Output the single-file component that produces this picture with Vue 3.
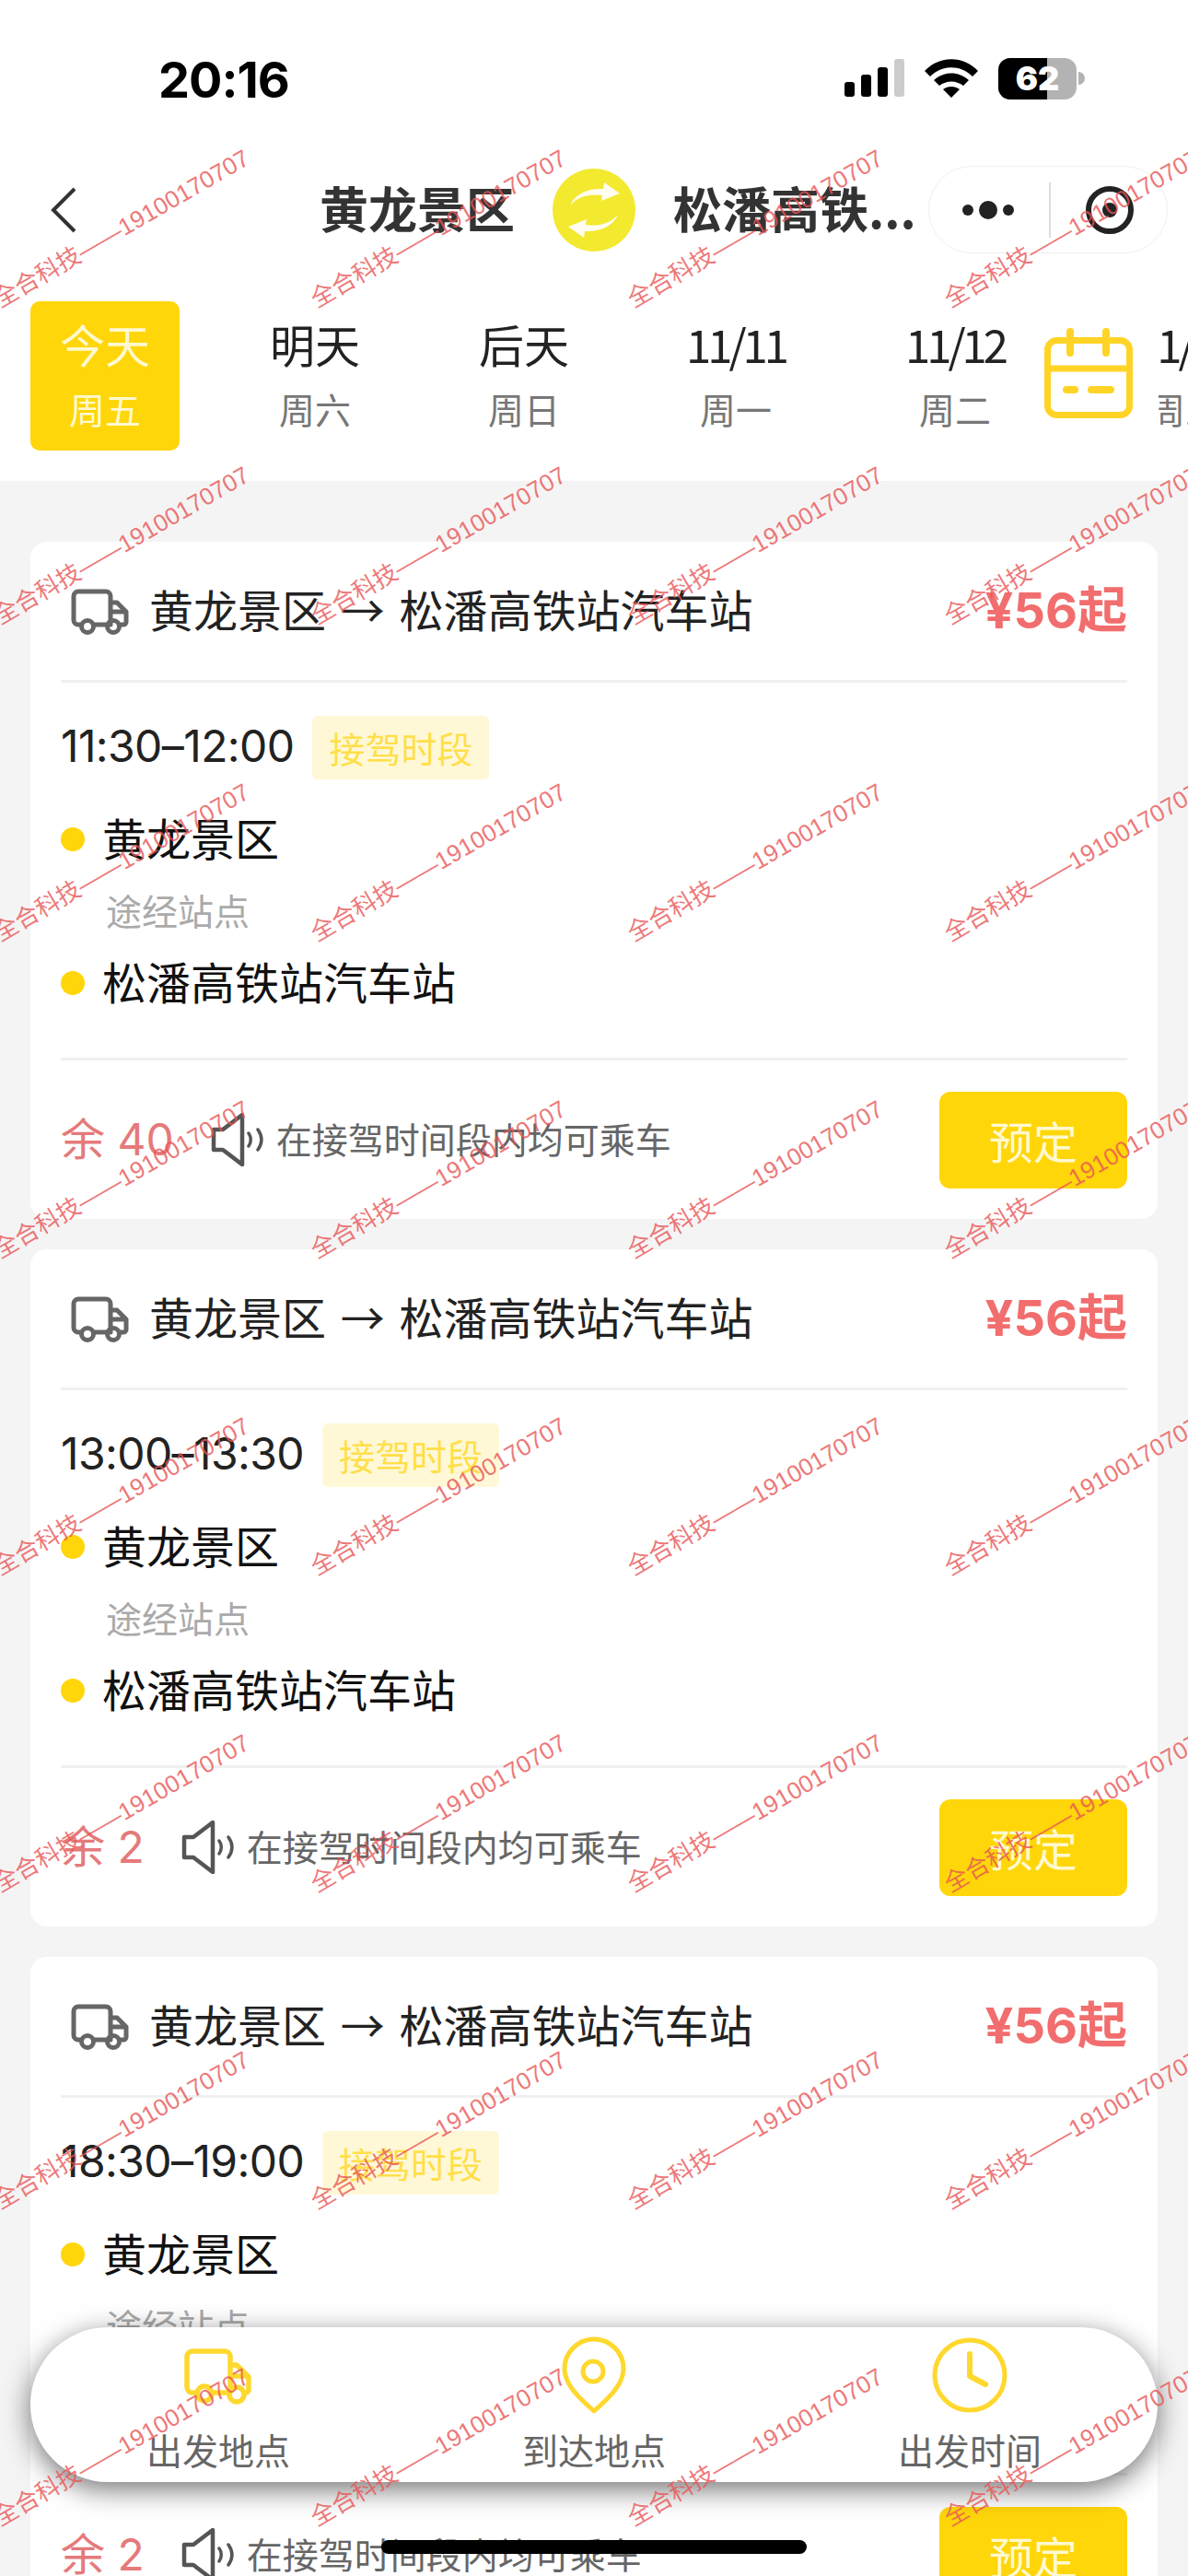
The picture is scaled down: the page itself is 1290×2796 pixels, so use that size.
<script setup>
const dates = [
  { top: '今天', sub: '周五', active: true },
  { top: '明天', sub: '周六', w: 228 },
  { top: '后天', sub: '周日', w: 226 },
  { top: '11/11', sub: '周一', w: 234 },
  { top: '11/12', sub: '周二', w: 242 },
  { top: '11/13', sub: '周三', w: 258 }
]
const cards = [
  { time: '11:30–12:00', left: '余 40' },
  { time: '13:00–13:30', left: '余 2' },
  { time: '18:30–19:00', left: '余 2' }
]
const marks = Array.from({ length: 36 })
</script>

<template>
  <div class="page">
    <header class="head">
      <div class="status">
        <span class="clock">20:16</span>
        <div class="status-icons">
          <svg width="65" height="44" viewBox="0 0 65 44"><rect x="0" y="26" width="11" height="16" rx="3" fill="#000"/><rect x="18" y="18" width="11" height="24" rx="3" fill="#000"/><rect x="36" y="10" width="11" height="32" rx="3" fill="#000"/><rect x="54" y="1" width="11" height="41" rx="3" fill="#ccc"/></svg>
          <svg width="58" height="44" viewBox="0 0 58 44"><path d="M0 14C16-3 42-3 58 14l-6 6C39 7 19 7 6 20Z" fill="#000"/><path d="M10 24c11-10 27-10 38 0l-6 6c-8-6-18-6-26 0Z" fill="#000"/><path d="M20 34c5-4 13-4 18 0l-9 9Z" fill="#000"/></svg>
          <div class="battery"><span class="battery-fill"></span><b>62</b></div>
          <span class="battery-cap"></span>
        </div>
      </div>
      <nav class="nav">
        <svg class="back" width="30" height="50" viewBox="0 0 30 50"><path d="M27 2 4 25l23 23" fill="none" stroke="#333" stroke-width="4"/></svg>
        <div class="route">
          <span class="route-name">黄龙景区</span>
          <svg class="swap" width="90" height="90" viewBox="0 0 90 90"><circle cx="45" cy="45" r="45" fill="#f3e92f"/><path d="M19 40C24 28 38 21 55 22l1-7 17 12-20 8 1-6C40 27 28 30 19 40Z" fill="#fffdf0"/><path d="M19 40C24 28 38 21 55 22l1-7 17 12-20 8 1-6C40 27 28 30 19 40Z" fill="#fffdf0" transform="rotate(180 45 45)"/></svg>
          <span class="route-name">松潘高铁...</span>
        </div>
        <div class="capsule">
          <svg width="70" height="24" viewBox="0 0 70 24"><circle cx="13" cy="12" r="6" fill="#222"/><circle cx="35" cy="12" r="10" fill="#222"/><circle cx="57" cy="12" r="6" fill="#222"/></svg>
          <span class="capsule-line"></span>
          <svg class="capsule-target" width="52" height="52" viewBox="0 0 52 52"><circle cx="26" cy="26" r="23" fill="none" stroke="#222" stroke-width="6"/><circle cx="26" cy="26" r="8" fill="#222"/></svg>
        </div>
      </nav>
      <div class="dates">
        <div class="date-list">
          <div v-for="d in dates" :key="d.top" class="date" :class="{ active: d.active }" :style="d.w ? { width: d.w + 'px' } : null">
            <span class="date-top">{{ d.top }}</span>
            <span class="date-sub">{{ d.sub }}</span>
          </div>
        </div>
        <div class="calendar">
          <svg width="96" height="100" viewBox="0 0 96 100"><rect x="3.5" y="13.5" width="89" height="81" rx="10" fill="none" stroke="#ffd426" stroke-width="7"/><path d="M4 44h88" stroke="#ffd426" stroke-width="7"/><path d="M28 4v23M67 4v23" stroke="#ffd426" stroke-width="8" stroke-linecap="round"/><rect x="20" y="63" width="17" height="8" rx="4" fill="#ffd426"/><rect x="47" y="63" width="29" height="8" rx="4" fill="#ffd426"/></svg>
        </div>
      </div>
    </header>

    <main class="cards">
      <article v-for="c in cards" :key="c.time" class="card">
        <div class="card-head">
          <svg width="64" height="52" viewBox="0 0 64 52"><path d="M12 41H9a5 5 0 0 1-5-5V10a5 5 0 0 1 5-5h30a5 5 0 0 1 5 5v31H26M44 17h7l10 10v11a3 3 0 0 1-3 3h-4M44 27h17" fill="none" stroke="#666" stroke-width="5" stroke-linejoin="round"/><circle cx="19" cy="43" r="6.5" fill="none" stroke="#666" stroke-width="5"/><circle cx="47" cy="43" r="6.5" fill="none" stroke="#666" stroke-width="5"/></svg>
          <span class="line-name">黄龙景区 → 松潘高铁站汽车站</span>
          <span class="price">¥56起</span>
        </div>
        <div class="card-body">
          <div class="time-row">
            <span class="time">{{ c.time }}</span>
            <span class="tag">接驾时段</span>
          </div>
          <div class="stop"><i></i><span>黄龙景区</span></div>
          <div class="via">途经站点</div>
          <div class="stop"><i></i><span>松潘高铁站汽车站</span></div>
        </div>
        <div class="card-foot">
          <span class="left">{{ c.left }}</span>
          <svg class="speaker" width="58" height="58" viewBox="0 0 58 58"><path d="M3 18h10L34 2v54L13 40H3Z" fill="none" stroke="#555" stroke-width="4.5" stroke-linejoin="round"/><path d="M41 22c3 4 3 10 0 14M51 18c5 7 5 15 0 22" fill="none" stroke="#555" stroke-width="3.5" stroke-linecap="round"/></svg>
          <span class="notice">在接驾时间段内均可乘车</span>
          <button class="book">预定</button>
        </div>
      </article>
    </main>

    <footer class="tabbar">
      <div class="tab">
        <svg class="tab-truck" width="74" height="64" viewBox="0 0 74 64"><path d="M14 49H9a6 6 0 0 1-6-6V10a6 6 0 0 1 6-6h35a6 6 0 0 1 6 6v39H31M50 19h7l13 13v14a3 3 0 0 1-3 3h-1M50 31h20" fill="none" stroke="#ffd82e" stroke-width="5.5" stroke-linejoin="round"/><circle cx="22" cy="50" r="8" fill="none" stroke="#ffd82e" stroke-width="5.5"/><circle cx="57" cy="51" r="8" fill="none" stroke="#ffd82e" stroke-width="5.5"/></svg>
        <span>出发地点</span>
      </div>
      <div class="tab">
        <svg width="74" height="84" viewBox="0 0 74 84"><path d="M37 81C20 66 5 52 5 35a32 32 0 0 1 64 0C69 52 54 66 37 81Z" fill="none" stroke="#ffd82e" stroke-width="5" stroke-linejoin="round"/><circle cx="36" cy="38" r="11" fill="none" stroke="#ffd82e" stroke-width="5"/></svg>
        <span>到达地点</span>
      </div>
      <div class="tab">
        <svg width="84" height="84" viewBox="0 0 84 84"><circle cx="42" cy="42" r="38" fill="none" stroke="#ffd82e" stroke-width="5"/><path d="M42 19v24l17 9" fill="none" stroke="#ffd82e" stroke-width="6" stroke-linecap="round" stroke-linejoin="round"/></svg>
        <span>出发时间</span>
      </div>
    </footer>

    <div class="home-bar"></div>

    <div class="watermarks">
      <span v-for="(m, i) in marks" :key="i">全合科技——19100170707</span>
    </div>
  </div>
</template>

<style scoped>
.page {
  position: relative;
  width: 1290px;
  height: 2796px;
  overflow: hidden;
  background: #f5f4f5;
  font-family: "Noto Sans CJK SC", "Noto Sans", sans-serif;
  color: #111;
}
.head {
  background: #fff;
  height: 522px;
}
.status {
  height: 180px;
  display: flex;
  justify-content: space-between;
  align-items: flex-start;
  padding: 62px 112px 0 172px;
  box-sizing: border-box;
}
.clock {
  font: 700 54px/50px "Inter", sans-serif;
  letter-spacing: -1px;
  color: #000;
}
.status-icons {
  display: flex;
  align-items: center;
  gap: 22px;
  height: 46px;
}
.battery {
  position: relative;
  width: 85px;
  height: 45px;
  border-radius: 13px;
  background: #b3b3b3;
  overflow: hidden;
  text-align: center;
  color: #fff;
  font: 700 36px/45px "Inter", sans-serif;
}
.battery-fill {
  position: absolute;
  left: 0;
  top: 0;
  bottom: 0;
  width: 53px;
  background: #000;
}
.battery b {
  position: relative;
}
.battery-cap {
  width: 7px;
  height: 14px;
  margin-left: -20px;
  background: #b3b3b3;
  border-radius: 0 7px 7px 0;
}
.nav {
  height: 95px;
  display: flex;
  align-items: center;
  padding: 0 22px 0 54px;
}
.route {
  flex: 1;
  display: flex;
  align-items: center;
  padding-left: 263px;
}
.route-name {
  font-size: 53px;
  font-weight: 700;
  color: #333;
  white-space: nowrap;
  padding-bottom: 6px;
}
.swap {
  margin: 0 41px;
  flex: none;
}
.capsule {
  width: 260px;
  height: 95px;
  box-sizing: border-box;
  border: 1.5px solid #eee;
  border-radius: 48px;
  display: flex;
  align-items: center;
  padding-left: 29px;
  flex: none;
}
.capsule-line {
  width: 2px;
  height: 60px;
  background: #ddd;
  margin-left: 31px;
}
.capsule-target {
  margin-left: 38px;
}
.dates {
  position: relative;
  margin-top: 52px;
  height: 162px;
  overflow: hidden;
}
.date-list {
  display: flex;
  padding-left: 33px;
}
.date {
  height: 162px;
  flex: none;
  display: flex;
  flex-direction: column;
  align-items: center;
  padding-top: 10px;
  box-sizing: border-box;
  border-radius: 10px;
}
.date.active {
  width: 162px;
  margin-right: 33px;
  background: #ffd60a;
  color: #fff;
}
.date-top {
  font-size: 49px;
  line-height: 72px;
  letter-spacing: -4px;
  color: #222;
  white-space: nowrap;
}
.date.active .date-top,
.date:nth-child(2) .date-top,
.date:nth-child(3) .date-top {
  letter-spacing: 0;
}
.date-sub {
  font-size: 39px;
  line-height: 56px;
  margin-top: 6px;
  color: #777;
}
.date.active .date-top,
.date.active .date-sub {
  color: #fff9cf;
}
.calendar {
  position: absolute;
  right: 32px;
  top: 0;
  bottom: 0;
  width: 138px;
  padding-left: 14px;
  padding-top: 29px;
  box-sizing: border-box;
  background: #fff;
}
.cards {
  padding: 66px 33px 0;
  display: flex;
  flex-direction: column;
  gap: 33px;
}
.card {
  flex: none;
  height: 735px;
  background: #fff;
  border-radius: 18px;
  padding: 0 33px;
  box-sizing: border-box;
}
.card-head {
  height: 153px;
  border-bottom: 3px solid #f0f0f0;
  box-sizing: border-box;
  display: flex;
  align-items: center;
  padding-left: 10px;
  gap: 22px;
}
.line-name {
  flex: 1;
  font-size: 48px;
  color: #222;
  white-space: nowrap;
  word-spacing: 5px;
  padding-bottom: 6px;
}
.price {
  font: 700 54px/1 "Inter", "Noto Sans CJK SC", sans-serif;
  color: #f26d6d;
}
.card-body {
  height: 410px;
  border-bottom: 3px solid #f0f0f0;
  box-sizing: border-box;
  padding-top: 36px;
}
.time-row {
  display: flex;
  align-items: center;
  gap: 20px;
  height: 69px;
  margin-bottom: 26px;
}
.time {
  font: 400 48px/1 "Inter", sans-serif;
  letter-spacing: -0.6px;
  color: #222;
  padding-bottom: 4px;
}
.tag {
  width: 192px;
  height: 69px;
  background: #fff8d6;
  color: #ffdf4a;
  border-radius: 6px;
  font-size: 39px;
  line-height: 69px;
  text-align: center;
}
.stop {
  display: flex;
  align-items: center;
  height: 78px;
  font-size: 48px;
  color: #111;
  gap: 21px;
}
.stop span {
  padding-bottom: 6px;
  margin-left: -2px;
}
.stop i {
  width: 26px;
  height: 26px;
  border-radius: 50%;
  background: #ffd60a;
}
.via {
  height: 78px;
  line-height: 74px;
  padding-left: 49px;
  font-size: 39px;
  color: #aaa;
}
.card-foot {
  height: 172px;
  display: flex;
  align-items: center;
}
.left {
  font: 400 48px/1 "Inter", "Noto Sans CJK SC", sans-serif;
  color: #e57a7a;
}
.speaker {
  margin-left: 40px;
  margin-right: 13px;
  flex: none;
}
.notice {
  flex: 1;
  font-size: 39px;
  color: #666;
  white-space: nowrap;
  padding-bottom: 4px;
}
.book {
  width: 204px;
  height: 105px;
  border: 0;
  border-radius: 12px;
  background: #ffd60a;
  color: #fff9cf;
  font: 400 48px/100px "Noto Sans CJK SC", sans-serif;
  padding: 0;
}
.tabbar {
  position: absolute;
  left: 33px;
  top: 2526px;
  width: 1224px;
  height: 168px;
  border-radius: 84px;
  background: #fff;
  box-shadow: 0 8px 30px rgba(0, 0, 0, 0.55);
  display: grid;
  grid-template-columns: repeat(3, 408px);
}
.tab {
  position: relative;
  display: flex;
  flex-direction: column;
  align-items: center;
  justify-content: flex-end;
}
.tab svg {
  position: absolute;
  left: 50%;
  top: 10px;
  transform: translateX(-50%);
}
.tab .tab-truck {
  top: 22px;
}
.tab span {
  font-size: 39px;
  line-height: 72px;
  color: #666;
}
.home-bar {
  position: absolute;
  left: 414px;
  top: 2757px;
  width: 462px;
  height: 15px;
  border-radius: 8px;
  background: #000;
}
.watermarks {
  position: absolute;
  left: 0;
  top: -348px;
  width: 1376px;
  display: grid;
  grid-template-columns: repeat(4, 344px);
  grid-auto-rows: 344px;
  pointer-events: none;
}
.watermarks span {
  display: block;
  height: 344px;
  font: 400 26px/1 "Liberation Sans", "Noto Sans CJK SC", sans-serif;
  color: rgba(232, 84, 84, 0.8);
  white-space: nowrap;
  transform-origin: 0 344px;
  transform: translate(2px, -2px) rotate(-30deg);
  padding-top: 318px;
  box-sizing: border-box;
}
</style>

<style>
body { margin: 0; }
</style>
